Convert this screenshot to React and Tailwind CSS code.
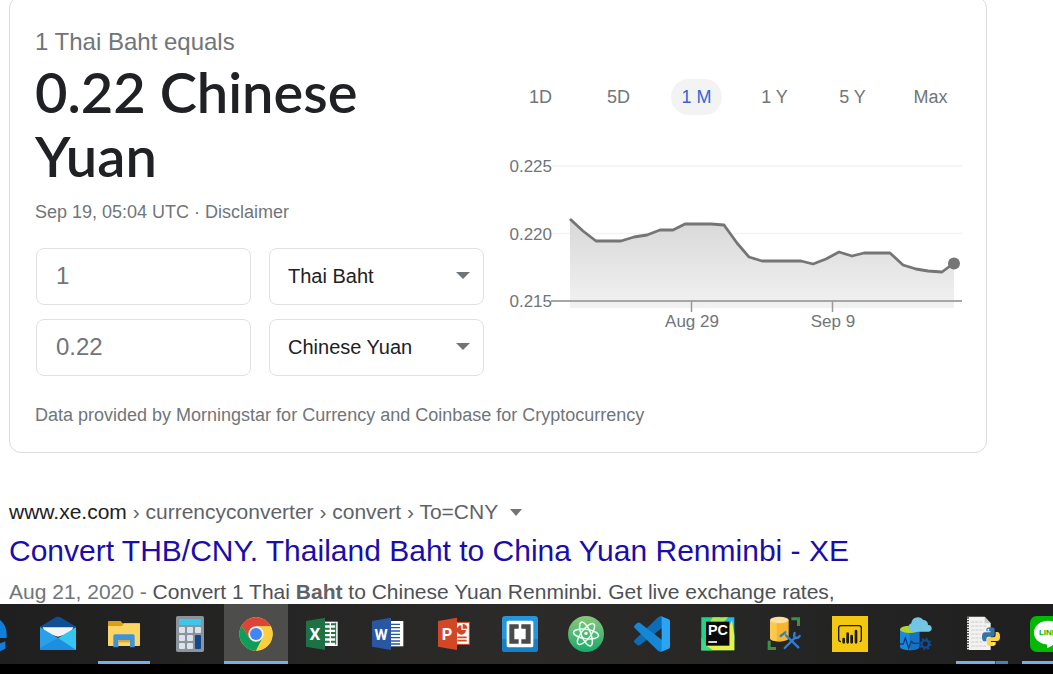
import React, { useState } from 'react';

const RANGES = ['1D', '5D', '1 M', '1 Y', '5 Y', 'Max'];

const POINTS = [
  [61, 69], [74, 81], [87, 91], [112, 91], [125, 87], [138, 85], [151, 80], [164, 80],
  [176, 74], [202, 74], [215, 75], [228, 93], [240, 107], [253, 111], [292, 111],
  [304, 114], [317, 109], [330, 102], [343, 106], [355, 103], [381, 103], [394, 115],
  [407, 119], [419, 121], [433, 122], [445, 113],
];

const LINE = POINTS.map((p) => p.join(',')).join(' ');

function RateChart() {
  return (
    <svg viewBox="0 0 453 185" className="mt-[35px] block w-full" role="img" aria-label="THB to CNY, one month">
      <defs>
        <linearGradient id="area" x1="0" y1="0" x2="0" y2="1">
          <stop offset="0" stopColor="#d8d8d8" />
          <stop offset="1" stopColor="#f2f2f2" />
        </linearGradient>
      </defs>
      <path d="M43 16H453M43 83.500H453" stroke="#f1f3f4" strokeWidth="1.500" />
      <polygon points={`61,158 ${LINE} 445,158`} fill="url(#area)" />
      <path d="M42 151H453" stroke="#a6a6a6" strokeWidth="2" />
      <path d="M182.500 151V162M323.500 151V162" stroke="#9a9a9a" strokeWidth="1.500" />
      <polyline points={LINE} fill="none" stroke="#757575" strokeWidth="2.800" strokeLinejoin="round" />
      <circle cx="445" cy="113.500" r="6" fill="#757575" />
      <g fontSize="17" fill="#70757a">
        <g textAnchor="end">
          <text x="43" y="22">0.225</text>
          <text x="43" y="90">0.220</text>
          <text x="43" y="157">0.215</text>
        </g>
        <g textAnchor="middle">
          <text x="183" y="177">Aug 29</text>
          <text x="324" y="177">Sep 9</text>
        </g>
      </g>
    </svg>
  );
}

function AmountRow({ id, amount, currency, options }) {
  return (
    <>
      <input
        id={`${id}-amount`}
        aria-label={`${currency} amount`}
        defaultValue={amount}
        className="h-[57px] w-full min-w-0 rounded-lg border border-[#dfe1e5] bg-white px-[19px] pb-[2px] text-2xl text-[#70757a] outline-none"
      />
      <div className="relative">
        <select
          id={`${id}-currency`}
          aria-label="Currency"
          defaultValue={currency}
          className="h-[57px] w-full appearance-none rounded-lg border border-[#dfe1e5] bg-white pr-10 pb-[2px] pl-[18px] text-xl text-[#202124] outline-none"
        >
          {options.map((o) => (
            <option key={o}>{o}</option>
          ))}
        </select>
        <svg viewBox="0 0 14 7" className="pointer-events-none absolute top-6 right-[14px] h-[7px] w-[14px]">
          <path d="M0 0H14L7 7Z" fill="#70757a" />
        </svg>
      </div>
    </>
  );
}

function Converter() {
  const [range, setRange] = useState('1 M');
  const options = ['Thai Baht', 'Chinese Yuan'];
  return (
    <section className="-mt-1 rounded-xl border border-[#dadce0] pt-[29px] pr-6 pb-[25px] pl-[25px]">
      <div className="flex gap-[25px]">
        <div className="w-[449px] shrink-0">
          <div className="text-2xl leading-8 text-[#70757a]">1 Thai Baht equals</div>
          <h2 className="pt-[2px] font-[Lato,sans-serif] text-[56px] leading-[64px] font-semibold text-[#202124]">
            0.22 Chinese Yuan
          </h2>
          <div className="mt-3 text-lg leading-6 text-[#70757a]">
            Sep 19, 05:04 UTC · <a href="#disclaimer">Disclaimer</a>
          </div>
          <div className="mt-6 grid grid-cols-2 gap-x-[18px] gap-y-[14px] pl-px">
            <AmountRow id="from" amount="1" currency="Thai Baht" options={options} />
            <AmountRow id="to" amount="0.22" currency="Chinese Yuan" options={options} />
          </div>
        </div>
        <div className="min-w-0 flex-1 pt-[53px]">
          <div className="flex justify-between px-[6px]">
            {RANGES.map((r) => (
              <button
                key={r}
                onClick={() => setRange(r)}
                className={
                  r === range
                    ? 'h-9 w-[51px] rounded-full bg-[#f3f3f4] text-lg text-[#3367d6]'
                    : 'h-9 w-[51px] rounded-full text-lg text-[#70757a]'
                }
              >
                {r}
              </button>
            ))}
          </div>
          <RateChart />
        </div>
      </div>
      <div className="mt-[27px] text-lg leading-6 text-[#70757a]">
        Data provided by Morningstar for Currency and Coinbase for Cryptocurrency
      </div>
    </section>
  );
}

function SearchResult() {
  return (
    <article className="mt-[45px]">
      <div className="flex items-center text-[21px] leading-7 text-[#5f6368]">
        <a href="#xe">
          <span className="text-[#202124]">www.xe.com</span> › currencyconverter › convert › To=CNY
        </a>
        <button aria-label="More" className="ml-3">
          <svg viewBox="0 0 12 7" className="h-[7px] w-3">
            <path d="M0 0H12L6 7Z" fill="#70757a" />
          </svg>
        </button>
      </div>
      <h3 className="mt-[5px] text-[30px] leading-10 text-[#1a0dab]">
        <a href="#xe">Convert THB/CNY. Thailand Baht to China Yuan Renminbi - XE</a>
      </h3>
      <p className="mt-[7px] text-[21px] leading-7 text-[#4d5156]">
        <span className="text-[#70757a]">Aug 21, 2020 - </span>Convert 1 Thai <b className="text-[#5f6368]">Baht</b> to
        Chinese Yuan Renminbi. Get live exchange rates,
      </p>
    </article>
  );
}

function EdgeIcon() {
  return (
    <path
      d="M0 54C2 20 26 4 52 4C80 4 98 26 98 56V66H36C38 82 56 90 78 82C86 80 90 78 94 75V98C60 118 14 104 12 60C20 40 34 32 46 30C36 38 36 46 36 50H70C68 30 50 26 38 28C20 32 8 42 0 54Z"
      fill="#0f7fdb"
    />
  );
}

function MailIcon() {
  return (
    <g>
      <path d="M0 32L47 4Q54 0 61 4L108 32V50H0Z" fill="#0f4f94" />
      <path d="M8 34H100L92 50L54 62L16 50Z" fill="#f3f4f6" />
      <path d="M0 34L54 66V102H0Z" fill="#2ea9ee" />
      <path d="M108 34L54 66L40 74V102H108Z" fill="#36c4f0" />
      <path d="M0 34L108 102H0Z" fill="#2aa0ea" />
      <path d="M0 102V96L54 66L108 102Z" fill="#1c8fe0" />
    </g>
  );
}

function FolderIcon() {
  return (
    <g>
      <path d="M6 17Q6 15 8 15H44L50 22H100Q102 22 102 24V36H6Z" fill="#d9a013" />
      <path d="M6 30H48L54 22H100Q102 22 102 24V88Q102 90 100 90H8Q6 90 6 88Z" fill="#fbd664" />
      <path d="M22 94V60Q22 55 27 55H81Q86 55 86 60V94H72V72H37V94Z" fill="#3f92d8" />
      <path d="M37 72H72V79H37Z" fill="#d9a83a" />
    </g>
  );
}

function CalculatorIcon() {
  return (
    <g>
      <rect x="12" y="0" width="84" height="108" rx="5" fill="#8b939c" />
      <rect x="21" y="9" width="66" height="18" rx="2" fill="#3cc8ea" />
      {[33, 57, 81].map((y) =>
        [21, 45, 69].map((x) =>
          x === 69 && y > 40 ? null : <rect key={`${x}-${y}`} x={x} y={y} width="18" height="18" rx="3" fill="#dce2ea" />,
        ),
      )}
      <rect x="69" y="57" width="18" height="42" rx="3" fill="#104a8c" />
    </g>
  );
}

function ChromeIcon() {
  return (
    <g>
      <circle cx="54" cy="54" r="50" fill="#ffcd40" />
      <path d="M10.700 29A50 50 0 0 1 97.300 29L97.300 31H54L34 65.500Z" fill="#db4437" />
      <path d="M10.700 29A50 50 0 0 0 54 104L74 65.500H34Z" fill="#0f9d58" />
      <path d="M54 31H98.500A50 50 0 0 1 54 104L74 65.500Z" fill="#ffcd40" />
      <circle cx="54" cy="54" r="23" fill="#f1f1f1" />
      <circle cx="54" cy="54" r="18" fill="#4285f4" />
    </g>
  );
}

function OfficeBack({ color, letter, size }) {
  return (
    <g>
      <path d="M6 15L63 5V102L6 92Z" fill={color} />
      <text
        x="33"
        y="71"
        textAnchor="middle"
        fontSize={size}
        fill="#fff"
        className="font-[Roboto,sans-serif] font-bold"
      >
        {letter}
      </text>
    </g>
  );
}

function ExcelIcon() {
  return (
    <g>
      <rect x="60" y="17" width="41" height="73" fill="#fff" />
      <path d="M63 25H95M63 38H95M63 51H95M63 64H95M63 77H95" stroke="#217346" strokeWidth="6" />
      <path d="M79 20V86" stroke="#fff" strokeWidth="4" />
      <path d="M95 20V86" stroke="#217346" strokeWidth="3" />
      <OfficeBack color="#1e7145" letter="X" size="51" />
    </g>
  );
}

function WordIcon() {
  return (
    <g>
      <rect x="60" y="15" width="40" height="76" fill="#fff" />
      <path d="M62 25H90M62 35H90M62 45H90M62 55H90M62 65H90M62 75H90M62 84H90" stroke="#2b579a" strokeWidth="4" />
      <OfficeBack color="#2957a4" letter="W" size="45" />
    </g>
  );
}

function PowerPointIcon() {
  return (
    <g>
      <rect x="60" y="19" width="40" height="66" fill="#fff" stroke="#d24726" strokeWidth="3" />
      <path d="M76 28A14 14 0 1 0 90 42H76Z" fill="#d24726" />
      <path d="M80 24A14 14 0 0 1 94 38H80Z" fill="#d24726" />
      <path d="M64 64H92M64 74H92" stroke="#d24726" strokeWidth="5" />
      <OfficeBack color="#d24726" letter="P" size="49" />
    </g>
  );
}

function BracketsIcon() {
  return (
    <g>
      <rect width="108" height="108" rx="10" fill="#2596dc" />
      <path d="M0 70H108V98Q108 108 98 108H10Q0 108 0 98Z" fill="#167fc6" />
      <rect x="14" y="14" width="80" height="80" rx="5" fill="#fff" />
      <path d="M22 25H50V38H37V70H50V83H22ZM58 25H86V83H58V70H71V38H58Z" fill="#4a4a4a" />
    </g>
  );
}

function AtomIcon() {
  return (
    <g>
      <defs>
        <linearGradient id="atom" x1="0" y1="0" x2="0" y2="1">
          <stop offset="0" stopColor="#8bc77c" />
          <stop offset="1" stopColor="#19aa6b" />
        </linearGradient>
      </defs>
      <circle cx="54" cy="54" r="54" fill="url(#atom)" />
      <g fill="none" stroke="#e9fff4" strokeWidth="4.500" transform="rotate(8 54 54)">
        <ellipse cx="54" cy="54" rx="38" ry="14" />
        <ellipse cx="54" cy="54" rx="38" ry="14" transform="rotate(60 54 54)" />
        <ellipse cx="54" cy="54" rx="38" ry="14" transform="rotate(120 54 54)" />
      </g>
      <circle cx="54" cy="52" r="5" fill="#fff" />
    </g>
  );
}

function CodeIcon() {
  return (
    <g>
      <path d="M2 72Q-2 76 2 80L10 87Q14 90 18 87L84 36V4L80 0L72 4Z" fill="#0c6cb5" />
      <path d="M2 36Q-2 32 2 28L10 21Q14 18 18 21L84 72V104L80 108L72 104Z" fill="#1687d4" />
      <path d="M80 0L104 10Q108 12 108 16V92Q108 96 104 98L80 108Q83 106 83 102V6Q83 2 80 0Z" fill="#2aa5f3" />
    </g>
  );
}

function PyCharmIcon() {
  return (
    <g>
      <path d="M4 4H60L103 50V103H4Z" fill="#23d18b" />
      <path d="M70 4H103V72L84 60Z" fill="#20b8e8" />
      <path d="M38 4H84L72 18H30Z" fill="#a8e84c" />
      <path d="M4 103L20 86H88V30L96 12L103 60V103Z" fill="#e8f04a" />
      <path d="M4 64L20 90L40 103H4Z" fill="#3bd98a" />
      <rect x="18" y="17" width="70" height="72" fill="#0b0b0b" />
      <text x="24" y="57" fontSize="43" fill="#fff" className="font-['Liberation_Sans',sans-serif] font-bold">
        PC
      </text>
      <path d="M25 78H51" stroke="#fff" strokeWidth="5" />
    </g>
  );
}

function DatabaseToolsIcon() {
  return (
    <g>
      <path d="M12 12V66A28 11 0 0 0 68 66V12Z" fill="#f5b52c" />
      <path d="M12 12V66A28 11 0 0 0 32 76V12Z" fill="#fbc94e" />
      <ellipse cx="40" cy="12" rx="28" ry="10" fill="#fde0a0" />
      <path d="M76 4H102V30H93V13H76ZM5 74H14V93H30V102H5Z" fill="#3f8f46" />
      <g stroke="#2f7fd0" strokeWidth="7" strokeLinecap="round" fill="none">
        <path d="M56 96L88 64M97 94L60 58" />
        <path d="M86 51Q82 62 88 66Q95 68 101 60M44 60L58 49" />
      </g>
    </g>
  );
}

function PowerBiIcon() {
  return (
    <g>
      <rect width="108" height="108" fill="#f2c811" />
      <path d="M27 77Q20 77 20 70V36Q20 29 27 29H81Q88 29 88 36V70Q88 77 83 77" fill="none" stroke="#1c1a10" strokeWidth="4" />
      <path d="M35 79V69M47 79V53M59 79V60M72 79V45" stroke="#1c1a10" strokeWidth="8" strokeLinecap="round" />
    </g>
  );
}

function CloudDatabaseIcon() {
  return (
    <g>
      <path d="M6 40V92A29 11 0 0 0 64 92V40Z" fill="#1b87dd" />
      <path d="M35 45H64V92A29 11 0 0 1 35 103Z" fill="#1572c4" />
      <ellipse cx="35" cy="40" rx="29" ry="11" fill="#b4d422" />
      <path d="M6 84H16L22 66L32 96L40 76L46 82H64" fill="none" stroke="#0b3d78" strokeWidth="4" />
      <path d="M44 47A13 13 0 0 1 40 22A20 20 0 0 1 76 12A14 14 0 0 1 90 27A10 10 0 0 1 92 47Z" fill="#73c5e4" />
      <circle cx="82" cy="84" r="11" fill="none" stroke="#0f4c94" strokeWidth="7" />
      <circle cx="82" cy="84" r="16" fill="none" stroke="#0f4c94" strokeWidth="5" strokeDasharray="6 6.500" />
    </g>
  );
}

function PythonNotebookIcon() {
  return (
    <g>
      <path d="M9 2H62L80 22V102H9Z" fill="#f2f2f0" />
      <path d="M62 2V22H80Z" fill="#c9c9c9" />
      <path d="M12 4V102" stroke="#252525" strokeWidth="5" strokeDasharray="4 4" />
      <path d="M22 18H56M22 30H70M22 42H60M22 54H50M22 66H52M22 78H56M22 90H66" stroke="#b9b9b9" strokeWidth="2" strokeDasharray="9 3" />
      <path d="M67 46V40Q67 34 80 34Q92 34 92 41V56Q92 62 86 62H74Q67 62 67 69V76H62Q54 76 54 62Q54 49 63 49H81V46Z" fill="#3673a8" />
      <path d="M95 78V84Q95 90 82 90Q69 90 69 83V70Q69 64 75 64H88Q95 64 95 57V48H100Q108 48 108 62Q108 75 99 75H81V78Z" fill="#ffd545" />
      <circle cx="73" cy="41" r="3" fill="#fff" />
      <circle cx="89" cy="83" r="3" fill="#fff" />
    </g>
  );
}

function LineIcon() {
  return (
    <g>
      <rect width="108" height="108" rx="20" fill="#00b900" />
      <path d="M54 14C30 14 12 30 12 50C12 68 27 82 48 85C54 86 51 90 51 95C51 99 96 76 96 50C96 30 78 14 54 14Z" fill="#fff" />
      <text
        x="54"
        y="58"
        textAnchor="middle"
        fontSize="24"
        fill="#00b900"
        className="font-['Liberation_Sans',sans-serif] font-bold"
      >
        LINE
      </text>
    </g>
  );
}

const APPS = [
  { name: 'Edge', Icon: EdgeIcon },
  { name: 'Mail', Icon: MailIcon },
  { name: 'File Explorer', Icon: FolderIcon, open: true },
  { name: 'Calculator', Icon: CalculatorIcon },
  { name: 'Chrome', Icon: ChromeIcon, active: true },
  { name: 'Excel', Icon: ExcelIcon },
  { name: 'Word', Icon: WordIcon },
  { name: 'PowerPoint', Icon: PowerPointIcon },
  { name: 'Brackets', Icon: BracketsIcon },
  { name: 'Atom', Icon: AtomIcon },
  { name: 'Visual Studio Code', Icon: CodeIcon },
  { name: 'PyCharm', Icon: PyCharmIcon },
  { name: 'SQL tools', Icon: DatabaseToolsIcon },
  { name: 'Power BI', Icon: PowerBiIcon },
  { name: 'Data Studio', Icon: CloudDatabaseIcon },
  { name: 'Python', Icon: PythonNotebookIcon, open: true, stacked: true },
  { name: 'Line', Icon: LineIcon, open: true },
];

function Taskbar() {
  return (
    <nav className="shrink-0 overflow-hidden border-b-[10px] border-black bg-linear-to-r from-[#1f1f1f] via-[#2c2b2a] to-[#1f1f1f]">
      <div className="-ml-10 flex gap-[2px]">
        {APPS.map(({ name, Icon, open, active, stacked }) => (
          <button
            key={name}
            aria-label={name}
            className={
              active
                ? 'flex h-[60px] w-16 shrink-0 flex-col items-center bg-[#4d4d4c] pt-3'
                : 'flex h-[60px] w-16 shrink-0 flex-col items-center pt-3'
            }
          >
            <svg viewBox="0 0 108 108" className="h-9 w-9 shrink-0">
              <Icon />
            </svg>
            {active && <span className="mt-[9px] h-[3px] w-full bg-[#76b0e3]" />}
            {open && (
              <span className="mt-[9px] flex h-[3px] w-[52px] bg-[#76b0e3]">
                {stacked && <span className="ml-auto w-[13px] border-l border-[#2a4a68] bg-[#4f7fae]" />}
              </span>
            )}
          </button>
        ))}
      </div>
    </nav>
  );
}

export default function App() {
  return (
    <div className="flex h-screen flex-col bg-white font-['Liberation_Sans',Arial,sans-serif]">
      <main className="flow-root min-h-0 flex-1 overflow-hidden pr-[66px] pl-[9px]">
        <Converter />
        <SearchResult />
      </main>
      <Taskbar />
    </div>
  );
}
